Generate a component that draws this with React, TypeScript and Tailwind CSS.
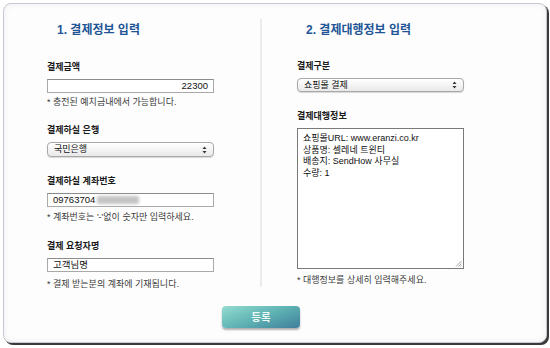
import React from "react";

const font = "font-['Liberation_Sans','Noto_Sans_CJK_KR',sans-serif]";

function SelectArrows() {
  return (
    <svg width="5" height="8" viewBox="0 0 5 8" className="shrink-0">
      <path d="M2.5 0.5 L4.5 3 L0.5 3 Z" fill="#333" />
      <path d="M2.5 7.5 L4.5 5 L0.5 5 Z" fill="#333" />
    </svg>
  );
}

function Select({ value, h }: { value: string; h: string }) {
  return (
    <div
      className={`mt-[6px] flex ${h} w-[167px] items-center justify-between rounded-[4px] border border-[#a8a8a8] bg-[linear-gradient(#ffffff,#e9e9e9)] pl-[6px] pr-[6px] text-[9px] leading-none text-[#111] shadow-[0_1px_1px_rgba(0,0,0,0.15)]`}
    >
      <span>{value}</span>
      <SelectArrows />
    </div>
  );
}

function Label({ children, mt }: { children: React.ReactNode; mt: string }) {
  return <div className={`${mt} h-[12px] text-[9px] font-bold leading-[12px] text-[#1a1a1a]`}>{children}</div>;
}

function Note({ children, mt }: { children: React.ReactNode; mt: string }) {
  return <div className={`${mt} h-[12px] text-[9px] leading-[12px] text-[#3a3a3a]`}>{children}</div>;
}

function Input({ children, right }: { children: React.ReactNode; right?: boolean }) {
  return (
    <div
      className={`mt-[6px] flex h-[14px] w-[167px] items-center border border-[#a9a9a9] border-t-[#8c8c8c] bg-white px-[5px] text-[9.5px] leading-none text-[#111] ${
        right ? "justify-end" : "justify-start"
      }`}
    >
      {children}
    </div>
  );
}

export default function App() {
  return (
    <div className={`h-[348px] w-[550px] bg-white pl-[3px] pt-[3px] ${font}`}>
      <div className="flex h-[340px] w-[544px] flex-col rounded-[8px] border border-[#c8c8d2] bg-[#fdfdfd] shadow-[2px_2px_0_#3a3a3a,inset_0_0_6px_rgba(0,0,0,0.07)]">
        <div className="flex items-start">
          {/* Left column */}
          <div className="flex w-[256px] flex-col pl-[43px] pt-[18px]">
            <div className="ml-[10px] h-[16px] text-[12px] font-bold leading-[16px] text-[#1f5596]">
              1. 결제정보 입력
            </div>
            <Label mt="mt-[23px]">결제금액</Label>
            <Input right>22300</Input>
            <Note mt="mt-[3px]">* 충전된 예치금내에서 가능합니다.</Note>
            <Label mt="mt-[16px]">결제하실 은행</Label>
            <Select value="국민은행" h="h-[15px]" />
            <Label mt="mt-[18px]">결제하실 계좌번호</Label>
            <Input>
              <span>09763704</span>
              <span className="ml-[2px] h-[8px] w-[42px] rounded-[2px] bg-[#c4c4c4] blur-[1.5px]" />
            </Input>
            <Note mt="mt-[4px]">* 계좌번호는 '-'없이 숫자만 입력하세요.</Note>
            <Label mt="mt-[17px]">결제 요청자명</Label>
            <Input>고객님명</Input>
            <Note mt="mt-[6px]">* 결제 받는분의 계좌에 기재됩니다.</Note>
          </div>

          {/* Divider */}
          <div className="mt-[15px] h-[268px] w-[2px] bg-[#ececec]" />

          {/* Right column */}
          <div className="flex flex-col pl-[35px] pt-[18px]">
            <div className="ml-[9px] h-[16px] text-[12px] font-bold leading-[16px] text-[#1f5596]">
              2. 결제대행정보 입력
            </div>
            <Label mt="mt-[22px]">결제구분</Label>
            <Select value="쇼핑몰 결제" h="h-[14px]" />
            <Label mt="mt-[18px]">결제대행정보</Label>
            <div className="relative mt-[6px] h-[141px] w-[167px] border border-[#7a7a7a] bg-white px-[5px] pt-[4px] text-[9px] leading-[11.7px] text-[#111]">
              <div>쇼핑몰URL: www.eranzi.co.kr</div>
              <div>상품명: 셀레네 트윈티</div>
              <div>배송지: SendHow 사무실</div>
              <div>수량: 1</div>
              <svg width="7" height="7" viewBox="0 0 7 7" className="absolute bottom-[1px] right-[1px]">
                <path d="M6.5 1 L1 6.5 M6.5 3.5 L3.5 6.5 M6.5 5.5 L5.5 6.5" stroke="#888" strokeWidth="0.8" />
              </svg>
            </div>
            <Note mt="mt-[5px]">* 대행정보를 상세히 입력해주세요.</Note>
          </div>
        </div>

        <div className="ml-[218px] mt-[16px] flex">
          <div className="flex h-[22px] w-[78px] items-center justify-center rounded-[4px] bg-[linear-gradient(160deg,#93dcd1_0%,#5fb3b3_50%,#3f7e9c_100%)] text-[10.5px] font-bold leading-none text-[#eefaf8] shadow-[0_2px_2px_rgba(0,0,0,0.3)]">
            등록
          </div>
        </div>
      </div>
    </div>
  );
}
